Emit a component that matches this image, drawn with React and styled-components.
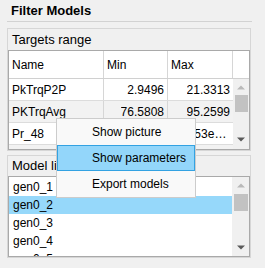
import styled, { createGlobalStyle } from 'styled-components';

const GlobalStyle = createGlobalStyle`
  html, body {
    margin: 0;
    padding: 0;
    background: #f0f0f0;
  }
  body {
    font-family: "Liberation Sans", Arial, sans-serif;
    color: #000;
  }
`;

const targets = [
  { name: 'PkTrqP2P', min: '2.9496', max: '21.3313' },
  { name: 'PKTrqAvg', min: '76.5808', max: '95.2599' },
  { name: 'Pr_48', min: '1.0416e+03', max: '1.1253e+03' },
  { name: 'Pr_52', min: '0.8812', max: '1.2040' },
];

const models = ['gen0_1', 'gen0_2', 'gen0_3', 'gen0_4', 'gen0_5'];

const menuItems = ['Show picture', 'Show parameters', 'Export models'];

const Page = styled.div`
  position: relative;
  width: 265px;
  height: 268px;
  overflow: hidden;
  padding: 0 14px 0 7px;
  box-sizing: border-box;
  display: flex;
  flex-direction: column;
`;

const Title = styled.div`
  height: 22px;
  margin-right: -1px;
  padding: 1px 0 0 4px;
  box-sizing: border-box;
  border-bottom: 1px solid #d2d2d2;
  font-size: 13px;
  font-weight: bold;
  line-height: 20px;
  margin-bottom: 6px;
`;

const Panel = styled.div`
  border: 1px solid #d6d6d6;
  background: #f0f0f0;
  display: flex;
  flex-direction: column;
  margin-top: ${p => p.$gap || 0}px;
`;

const PanelTitle = styled.div`
  height: ${p => p.$h}px;
  line-height: ${p => p.$h}px;
  padding-left: 4px;
  font-size: 13px;
  white-space: nowrap;
  overflow: hidden;
`;

const Box = styled.div`
  height: ${p => p.$h}px;
  box-sizing: border-box;
  border: 1px solid #a9a9a9;
  background: #fff;
  display: flex;
  flex-direction: ${p => (p.$row ? 'row' : 'column')};
  overflow: hidden;
`;

const HeadRow = styled.div`
  display: flex;
  height: 28px;
  box-sizing: border-box;
  border-bottom: 1px solid #d0d0d0;
  background: #fff;
`;

const Cell = styled.div`
  width: ${p => p.$w}px;
  flex: none;
  box-sizing: border-box;
  border-right: ${p => (p.$last ? 'none' : '1px solid #d6d6d6')};
  padding: 0 3px;
  font-size: 12px;
  white-space: nowrap;
  overflow: hidden;
  text-overflow: ellipsis;
  text-align: ${p => (p.$num ? 'right' : 'left')};
  display: flex;
  align-items: center;
  justify-content: ${p => (p.$num ? 'flex-end' : 'flex-start')};
`;

const CellText = styled.span`
  overflow: hidden;
  text-overflow: ellipsis;
  white-space: nowrap;
`;

const Body = styled.div`
  flex: 1;
  display: flex;
  min-height: 0;
`;

const Rows = styled.div`
  flex: 1;
  display: flex;
  flex-direction: column;
  overflow: hidden;
  padding-top: ${p => p.$pad || 0}px;
`;

const DataRow = styled.div`
  display: flex;
  flex: none;
  height: 22px;
  box-sizing: border-box;
  border-bottom: 1px solid #dcdcdc;
  background: ${p => (p.$alt ? '#f2f2f2' : '#fff')};
`;

const ListItem = styled.div`
  flex: none;
  height: 18px;
  line-height: 18px;
  padding-left: 4px;
  font-size: 12px;
  background: ${p => (p.$selected ? '#96d8fa' : 'transparent')};
`;

const Track = styled.div`
  width: ${p => p.$w}px;
  flex: none;
  background: #f0f0f0;
  display: flex;
  flex-direction: column;
  align-items: center;
  padding-bottom: ${p => p.$padBottom || 0}px;
  box-sizing: border-box;
`;

const ArrowBtn = styled.div`
  height: ${p => p.$h}px;
  width: 100%;
  flex: none;
  display: flex;
  align-items: center;
  justify-content: center;
`;

const Thumb = styled.div`
  width: ${p => p.$w}px;
  height: ${p => p.$h}px;
  flex: none;
  background: #c2c2c2;
`;

const Spacer = styled.div`
  flex: 1;
`;

const Menu = styled.div`
  position: absolute;
  left: 56px;
  top: 118px;
  width: 140px;
  box-sizing: border-box;
  border: 1px solid #cccccc;
  background: #f9f9f9;
  display: flex;
  flex-direction: column;
`;

const MenuItem = styled.div`
  height: 26px;
  box-sizing: border-box;
  border: 1px solid ${p => (p.$active ? '#33a2e2' : 'transparent')};
  background: ${p => (p.$active ? '#93d6fa' : 'transparent')};
  padding-left: 34px;
  line-height: 24px;
  font-size: 12px;
  white-space: nowrap;
`;

function Arrow({ up, dark }) {
  return (
    <svg width="8" height="5" viewBox="0 0 8 5">
      <polygon
        points={up ? '0,4.5 8,4.5 4,0.5' : '0,0.5 8,0.5 4,4.5'}
        fill={dark ? '#5a5a5a' : '#b9b9b9'}
      />
    </svg>
  );
}

function ScrollBar({ w, btn, thumbW, thumbH, padBottom }) {
  return (
    <Track $w={w} $padBottom={padBottom}>
      <ArrowBtn $h={btn}>
        <Arrow up />
      </ArrowBtn>
      <Thumb $w={thumbW} $h={thumbH} />
      <Spacer />
      <ArrowBtn $h={btn}>
        <Arrow dark />
      </ArrowBtn>
    </Track>
  );
}

export default function App() {
  return (
    <Page>
      <GlobalStyle />
      <Title>Filter Models</Title>

      <Panel>
        <PanelTitle $h={21}>Targets range</PanelTitle>
        <Box $h={100}>
          <HeadRow>
            <Cell $w={95}>Name</Cell>
            <Cell $w={64}>Min</Cell>
            <Cell $w={65}>Max</Cell>
            <Cell $w={16} $last />
          </HeadRow>
          <Body>
            <Rows>
              {targets.map((t, i) => (
                <DataRow key={t.name} $alt={i % 2 === 1}>
                  <Cell $w={95}>
                    <CellText>{t.name}</CellText>
                  </Cell>
                  <Cell $w={64} $num>
                    <CellText>{t.min}</CellText>
                  </Cell>
                  <Cell $w={65} $num $last>
                    <CellText>{t.max}</CellText>
                  </Cell>
                </DataRow>
              ))}
            </Rows>
            <ScrollBar w={16} btn={16} thumbW={13} thumbH={17} padBottom={2} />
          </Body>
        </Box>
      </Panel>

      <Panel $gap={4}>
        <PanelTitle $h={20}>Model list</PanelTitle>
        <Box $h={81} $row>
          <Rows $pad={1}>
            {models.map(m => (
              <ListItem key={m} $selected={m === 'gen0_2'}>
                {m}
              </ListItem>
            ))}
          </Rows>
          <ScrollBar w={17} btn={17} thumbW={14} thumbH={17} />
        </Box>
      </Panel>

      <Menu>
        {menuItems.map(item => (
          <MenuItem key={item} $active={item === 'Show parameters'}>
            {item}
          </MenuItem>
        ))}
      </Menu>
    </Page>
  );
}
